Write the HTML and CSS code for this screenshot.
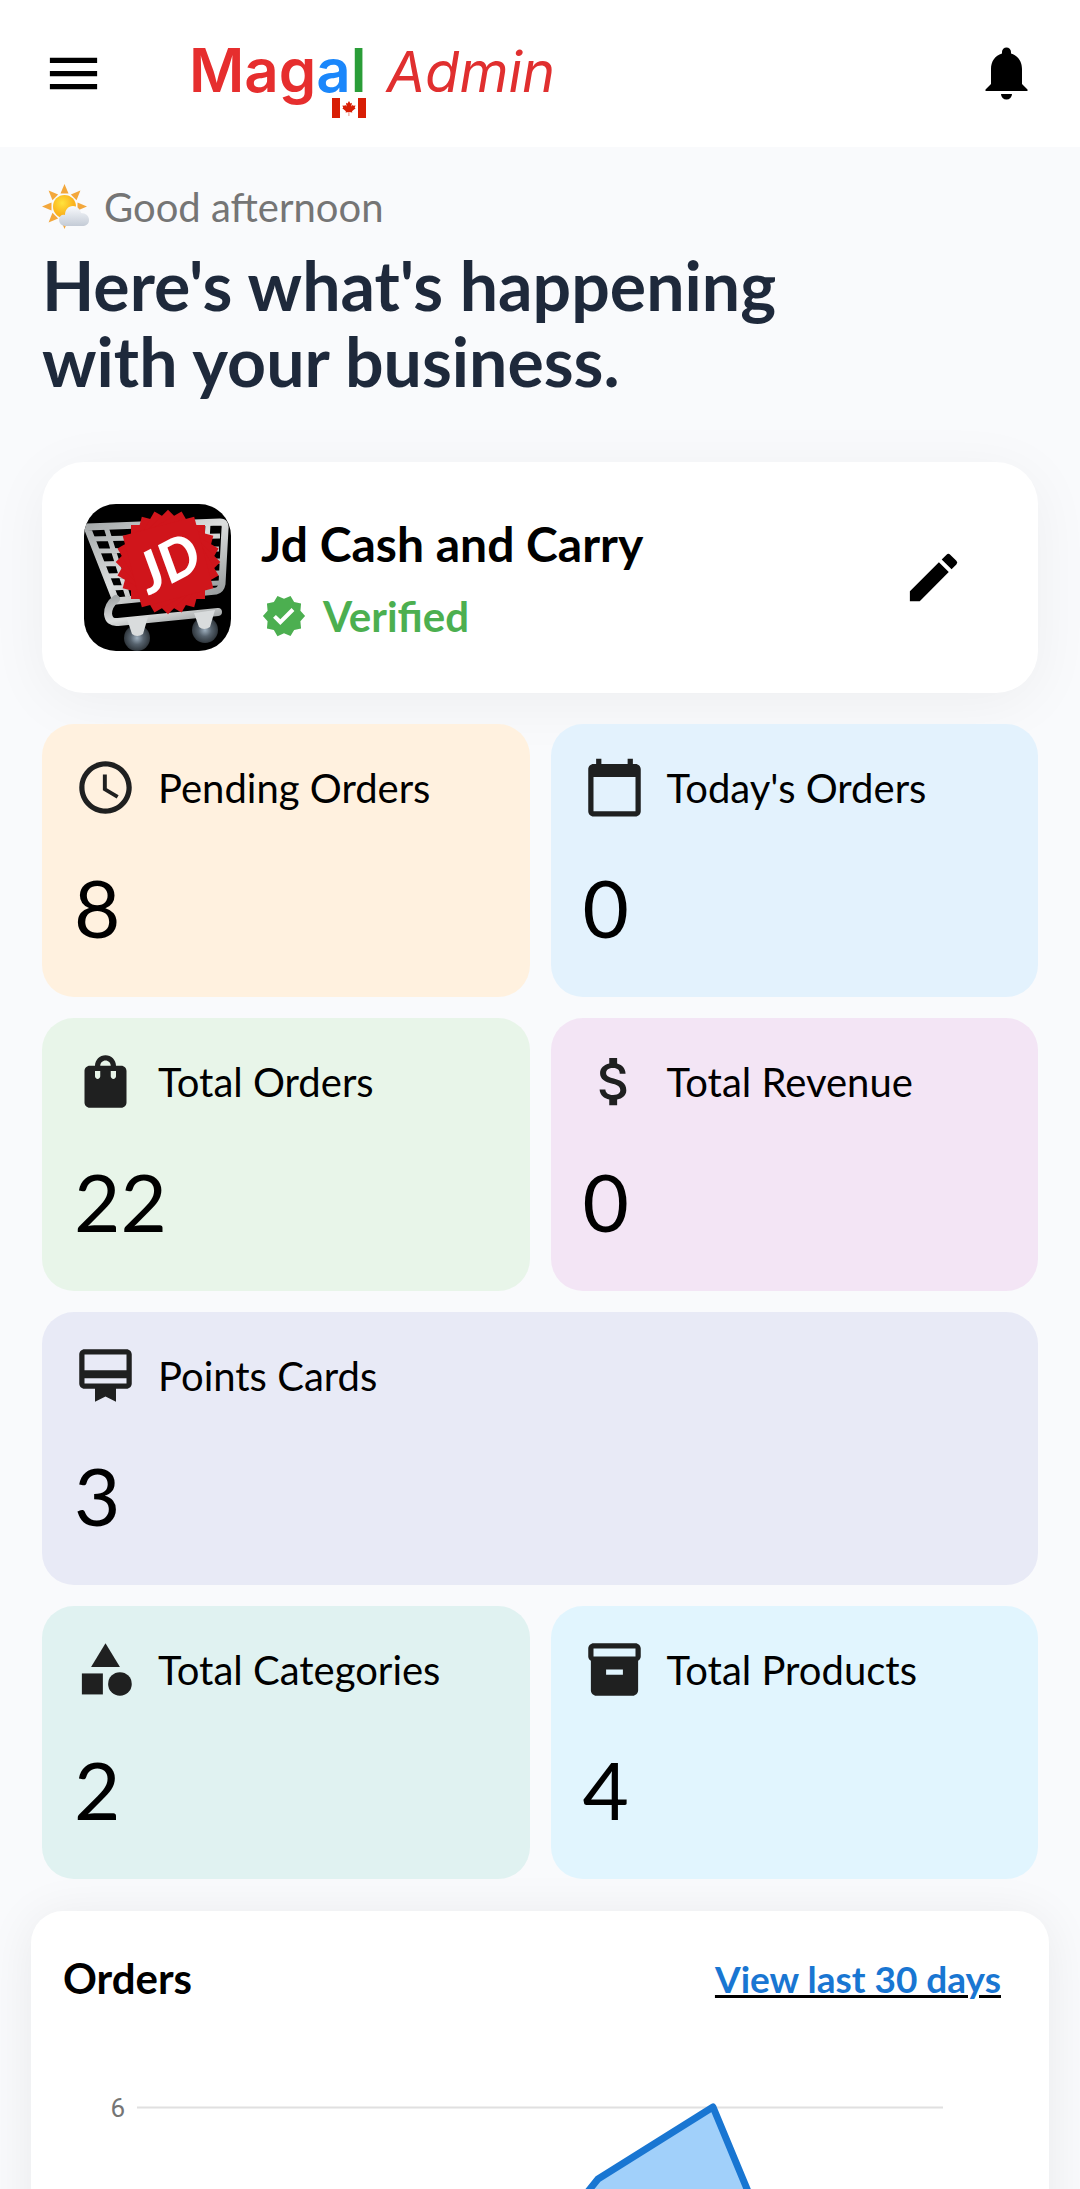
FILE: index.html
```html
<!DOCTYPE html>
<html lang="en">
<head>
    <meta charset="UTF-8">
    <meta name="viewport" content="width=device-width, initial-scale=1.0">
    <title>Magal Admin</title>
    <link rel="stylesheet" href="styles.css">
</head>
<body>
    <header class="topbar">
        <button class="icon-btn" aria-label="Menu">
            <svg class="icon" viewBox="0 0 24 24"><path d="M3 18h18v-2H3v2zm0-5h18v-2H3v2zm0-7v2h18V6H3z"/></svg>
        </button>
        <div class="brand">
            <span class="brand-name">Mag<span class="blue">a</span><span class="green">l</span>
                <svg class="flag" viewBox="0 0 34 20">
                    <path fill="#fff" d="M0 0h34v20H0z"/>
                    <path fill="#d81e05" d="M0 0h8v20H0zM26 0h8v20h-8zM17 3l1.4 2.6 1.5-.8-.6 3.6 1.6-1.6.4 1 2.2-.3-.8 2.2.9.6-3.6 2.9.3 1.2-3.1-.5v4h-.5v-4l-3.1.5.3-1.2-3.6-2.9.9-.6-.8-2.2 2.2.3.4-1 1.6 1.6-.6-3.6 1.5.8z"/>
                </svg>
            </span>
            <span class="brand-role">Admin</span>
        </div>
        <button class="icon-btn" aria-label="Notifications">
            <svg class="icon" viewBox="0 0 63 63"><path d="M31.500 5.500a4.500 4.500 0 0 1 4.500 4.500v1.500c7 2 11 8 11 15.500v15l5.500 5.500v1.500h-42v-1.500l5.500-5.500V27c0-7.500 4-13.500 11-15.500V10a4.500 4.500 0 0 1 4.500-4.500zM26 52h11a5.500 5.500 0 0 1-11 0z"/></svg>
        </button>
    </header>

    <main>
        <p class="greeting">
            <svg class="weather" viewBox="0 0 48 46">
                <defs>
                    <radialGradient id="sun" cx="40%" cy="35%"><stop offset="0" stop-color="#ffe23c"/><stop offset="1" stop-color="#fbb31d"/></radialGradient>
                    <linearGradient id="cloud" x1="0" y1="0" x2="0" y2="1"><stop offset="0" stop-color="#f8fafd"/><stop offset="1" stop-color="#c4cbd6"/></linearGradient>
                </defs>
                <g id="rays" fill="#f3a73c">
                    <path id="ray" d="M22.500 0l4 9.500h-8z"/>
                    <use href="#ray" transform="rotate(45 22.500 22.500)"/>
                    <use href="#ray" transform="rotate(90 22.500 22.500)"/>
                    <use href="#ray" transform="rotate(180 22.500 22.500)"/>
                    <use href="#ray" transform="rotate(225 22.500 22.500)"/>
                    <use href="#ray" transform="rotate(270 22.500 22.500)"/>
                    <use href="#ray" transform="rotate(315 22.500 22.500)"/>
                </g>
                <circle cx="22.500" cy="22.500" r="11.500" fill="url(#sun)"/>
                <path fill="url(#cloud)" d="M23 42a6 6 0 0 1-6-6c0-4 3-6 6-5 0-5 3-9 8-9 4 0 7 3 8 7 5 0 8 3 8 7 0 4-3 6-7 6z"/>
            </svg>
            Good afternoon
        </p>
        <h1>Here's what's happening<br>with your business.</h1>

        <section class="profile">
            <svg class="avatar" viewBox="0 0 147 147" role="img" aria-label="JD">
                <defs>
                    <linearGradient id="steel" x1="0" y1="0" x2="1" y2="1"><stop offset="0" stop-color="#a4a8a9"/><stop offset=".5" stop-color="#dcdede"/><stop offset="1" stop-color="#8f9495"/></linearGradient>
                    <radialGradient id="wheel"><stop offset="0" stop-color="#9fb0bf"/><stop offset=".5" stop-color="#56626d"/><stop offset="1" stop-color="#2f363c"/></radialGradient>
                </defs>
                <path d="M0 0h147v147H0z"/>
                <g fill="none" stroke="url(#steel)">
                    <path stroke-width="7" stroke-linejoin="round" d="M3 23L136 18q6 0 5 7l-3 55q-1 6-6 7L32 97z"/>
                    <path stroke-width="5" d="M6 35l130-3M11 47l124-2M16 60l120-3M22 72l114-3M27 84l109-5M22 23l22 70M124 20l-4 66"/>
                    <path stroke-width="8" stroke-linecap="round" d="M32 95q-8 6-8 15 1 9 10 8l100-10"/>
                </g>
                <g fill="url(#wheel)">
                    <ellipse cx="53" cy="134" rx="13" ry="13"/>
                    <ellipse cx="121" cy="126" rx="13" ry="13"/>
                </g>
                <path fill="#d9dcdd" d="M43 115l21-2-5 17q-6 4-11 0zM110 109l21-3-5 17q-6 4-11 0z"/>
                <g fill="#d0151b">
                    <rect id="tooth" x="47" y="21" width="74" height="74"/>
                    <use href="#tooth" transform="rotate(15 84 58)"/>
                    <use href="#tooth" transform="rotate(30 84 58)"/>
                    <use href="#tooth" transform="rotate(45 84 58)"/>
                    <use href="#tooth" transform="rotate(60 84 58)"/>
                    <use href="#tooth" transform="rotate(75 84 58)"/>
                </g>
                <text class="avatar-text" x="84" y="79" text-anchor="middle" transform="rotate(-27 84 58)">JD</text>
            </svg>
            <div class="profile-info">
                <h2>Jd Cash and Carry</h2>
                <p class="verified">
                    <svg class="badge" viewBox="0 0 24 24"><path d="M23 12l-2.440-2.790.34-3.690-3.610-.82-1.890-3.200L12 2.960 8.600 1.500 6.710 4.690 3.100 5.500l.34 3.700L1 12l2.440 2.790-.34 3.700 3.610.82L8.600 22.500l3.400-1.470 3.400 1.460 1.890-3.190 3.610-.82-.34-3.690L23 12zm-12.910 4.720l-3.800-3.810 1.480-1.480 2.320 2.330 5.850-5.870 1.480 1.480-7.330 7.350z"/></svg>
                    Verified
                </p>
            </div>
            <button class="icon-btn" aria-label="Edit">
                <svg class="icon" viewBox="0 0 24 24"><path d="M3 17.250V21h3.750L17.810 9.940l-3.750-3.750L3 17.250zM20.710 7.040a1 1 0 0 0 0-1.410l-2.340-2.340a1 1 0 0 0-1.410 0l-1.830 1.830 3.750 3.750 1.830-1.830z"/></svg>
            </button>
        </section>

        <section class="stats">
            <div class="stat orange">
                <h3><svg class="icon" viewBox="0 0 24 24"><path d="M11.990 2C6.470 2 2 6.480 2 12s4.470 10 9.990 10C17.520 22 22 17.520 22 12S17.520 2 11.990 2zM12 20c-4.420 0-8-3.580-8-8s3.580-8 8-8 8 3.580 8 8-3.580 8-8 8zm.5-13H11v6l5.250 3.150.75-1.230-4.500-2.670z"/></svg>Pending Orders</h3>
                <p>8</p>
            </div>
            <div class="stat blue-light">
                <h3><svg class="icon" viewBox="0 0 24 24"><path d="M20 3h-1V1h-2v2H7V1H5v2H4c-1.100 0-2 .9-2 2v16c0 1.100.9 2 2 2h16c1.100 0 2-.9 2-2V5c0-1.100-.9-2-2-2zm0 18H4V8h16v13z"/></svg>Today's Orders</h3>
                <p>0</p>
            </div>
            <div class="stat mint">
                <h3><svg class="icon" viewBox="0 0 24 24"><path fill-rule="evenodd" d="M18 6h-2c0-2.210-1.790-4-4-4S8 3.790 8 6H6c-1.100 0-2 .9-2 2v12c0 1.100.9 2 2 2h12c1.100 0 2-.9 2-2V8c0-1.100-.9-2-2-2zm-8 4c0 .55-.45 1-1 1s-1-.45-1-1V8h2v2zm2-6c1.100 0 2 .9 2 2h-4c0-1.100.9-2 2-2zm4 6c0 .55-.45 1-1 1s-1-.45-1-1V8h2v2z"/></svg>Total Orders</h3>
                <p>22</p>
            </div>
            <div class="stat purple">
                <h3><svg class="icon" viewBox="0 0 24 24"><path d="M11.800 10.900c-2.270-.59-3-1.200-3-2.150 0-1.090 1.010-1.850 2.700-1.850 1.780 0 2.440.85 2.500 2.100h2.210c-.07-1.720-1.120-3.300-3.210-3.810V3h-3v2.160c-1.940.42-3.500 1.680-3.500 3.610 0 2.310 1.910 3.460 4.700 4.130 2.500.6 3 1.480 3 2.410 0 .69-.49 1.790-2.700 1.790-2.060 0-2.870-.92-2.980-2.100h-2.200c.12 2.190 1.760 3.420 3.680 3.830V21h3v-2.150c1.950-.37 3.500-1.500 3.500-3.550 0-2.840-2.430-3.810-4.700-4.400z"/></svg>Total Revenue</h3>
                <p>0</p>
            </div>
            <div class="stat indigo wide">
                <h3><svg class="icon" viewBox="0 0 24 24"><path d="M20 2H4c-1.110 0-2 .89-2 2v11c0 1.110.89 2 2 2h4v5l4-2 4 2v-5h4c1.110 0 2-.89 2-2V4c0-1.110-.89-2-2-2zm0 13H4v-2h16v2zm0-5H4V4h16v6z"/></svg>Points Cards</h3>
                <p>3</p>
            </div>
            <div class="stat teal">
                <h3><svg class="icon" viewBox="0 0 24 24"><path d="M12 2l-5.500 9h11z"/><circle cx="17.500" cy="17.500" r="4.500"/><path d="M3 13.500h8v8H3z"/></svg>Total Categories</h3>
                <p>2</p>
            </div>
            <div class="stat cyan">
                <h3><svg class="icon" viewBox="0 0 24 24"><path fill-rule="evenodd" d="M20 2H4c-1 0-2 .9-2 2v3.010c0 .72.430 1.340 1 1.690V20c0 1.100 1.100 2 2 2h14c.9 0 2-.9 2-2V8.700c.57-.35 1-.97 1-1.690V4c0-1.100-1-2-2-2zm-4.800 12H8.800v-2h6.400v2zM20 7H4V4h16v3z"/></svg>Total Products</h3>
                <p>4</p>
            </div>
        </section>

        <section class="orders">
            <div class="orders-head">
                <h2>Orders</h2>
                <a href="#">View last 30 days</a>
            </div>
            <svg class="chart" viewBox="0 0 1018 520" role="img" aria-label="Orders chart">
                <path class="grid-line" d="M106 44.500h806"/>
                <text class="axis" x="94" y="54" text-anchor="end">6</text>
                <path class="area" d="M451 476V260L567 116 682 44 797 321v155z"/>
                <path class="line" d="M451 260L567 116 682 44 797 321"/>
            </svg>
        </section>
    </main>
</body>
</html>
```
FILE: styles.css
```css
* {
    box-sizing: border-box;
}
body {
    font-family: Lato, sans-serif;
    background-color: #f9fafc;
    color: #000;
    margin: 0;
    height: 100vh;
    display: flex;
    flex-direction: column;
}
h1, h2, h3, p {
    margin: 0;
}
.topbar {
    background: #fff;
    display: flex;
    align-items: center;
    flex-shrink: 0;
    height: 147px;
    padding: 0 42px;
}
.icon-btn {
    background: none;
    border: none;
    padding: 0;
    cursor: pointer;
}
.icon {
    display: block;
    width: 63px;
    height: 63px;
    flex-shrink: 0;
}
.brand {
    flex: 1;
    display: flex;
    align-items: baseline;
    gap: 20px;
    padding: 0 0 6px 84px;
    color: #e02f2f;
    font-family: Inter, sans-serif;
    line-height: 72px;
}
.brand-name {
    position: relative;
    font-size: 60px;
    font-weight: 600;
    color: #e62e2e;
}
.brand-name .blue {
    color: #1b87fb;
}
.brand-name .green {
    color: #2a9d38;
}
.brand-role {
    font-size: 56px;
    font-style: italic;
}
.flag {
    position: absolute;
    right: 0;
    bottom: -12px;
    width: 34px;
    height: 20px;
}
main {
    flex: 1;
    overflow: hidden;
    padding: 32px 42px 0;
}
.greeting {
    display: flex;
    align-items: center;
    gap: 14px;
    font-size: 40px;
    line-height: 56px;
    color: #757575;
}
.weather {
    width: 48px;
    height: 46px;
}
h1 {
    font-size: 68px;
    line-height: 76px;
    color: #1e293b;
    padding-top: 12px;
}
.profile {
    display: flex;
    align-items: center;
    gap: 30px;
    margin-top: 63px;
    padding: 42px 73px 42px 42px;
    background: #fff;
    border-radius: 42px;
    box-shadow: 0 10px 60px rgba(0, 0, 0, 0.05);
}
.avatar {
    width: 147px;
    height: 147px;
    border-radius: 32px;
}
.avatar-text {
    font-size: 56px;
    font-weight: 900;
    font-style: italic;
    fill: #fff;
}
.profile-info {
    flex: 1;
}
.profile-info h2 {
    font-size: 48px;
    line-height: 64px;
}
.verified {
    display: flex;
    align-items: center;
    gap: 16px;
    font-size: 42px;
    line-height: 56px;
    font-weight: bold;
    color: #4caf50;
    padding-top: 12px;
}
.badge {
    width: 46px;
    height: 46px;
    fill: #4caf50;
}
.stats {
    display: grid;
    grid-template-columns: 1fr 1fr;
    gap: 21px;
    margin-top: 31px;
}
.stat {
    border-radius: 32px;
    padding: 32px 32px 34px;
}
.stat h3 {
    display: flex;
    align-items: center;
    gap: 21px;
    font-size: 40px;
    font-weight: normal;
}
.stat .icon {
    fill: #1f2020;
}
.stat p {
    font-size: 80px;
    line-height: 112px;
    padding-top: 32px;
}
.wide {
    grid-column: span 2;
}
.orange {
    background: #fff1df;
}
.blue-light {
    background: #e3f2fd;
}
.mint {
    background: #e8f5e9;
}
.purple {
    background: #f3e5f5;
}
.indigo {
    background: #e8eaf6;
}
.teal {
    background: #e0f2f1;
}
.cyan {
    background: #e1f5fe;
}
.orders {
    margin: 32px -11px 0;
    background: #fff;
    border-radius: 32px;
    box-shadow: 0 5px 50px rgba(0, 0, 0, 0.07);
}
.orders-head {
    display: flex;
    justify-content: space-between;
    align-items: center;
    padding: 32px 48px 0 32px;
}
.orders-head h2 {
    font-size: 42px;
    line-height: 70px;
}
.orders-head a {
    font-size: 37px;
    font-weight: bold;
    color: #1976d2;
    text-decoration: underline #000 3px;
}
.chart {
    display: block;
    width: 100%;
    margin-top: 50px;
}
.grid-line {
    stroke: #e0e0e0;
    stroke-width: 2;
}
.axis {
    font-family: Roboto, sans-serif;
    font-size: 26px;
    fill: #757575;
}
.area {
    fill: #a1d0fa;
}
.line {
    fill: none;
    stroke: #1976d2;
    stroke-width: 7;
    stroke-linejoin: round;
}
```
